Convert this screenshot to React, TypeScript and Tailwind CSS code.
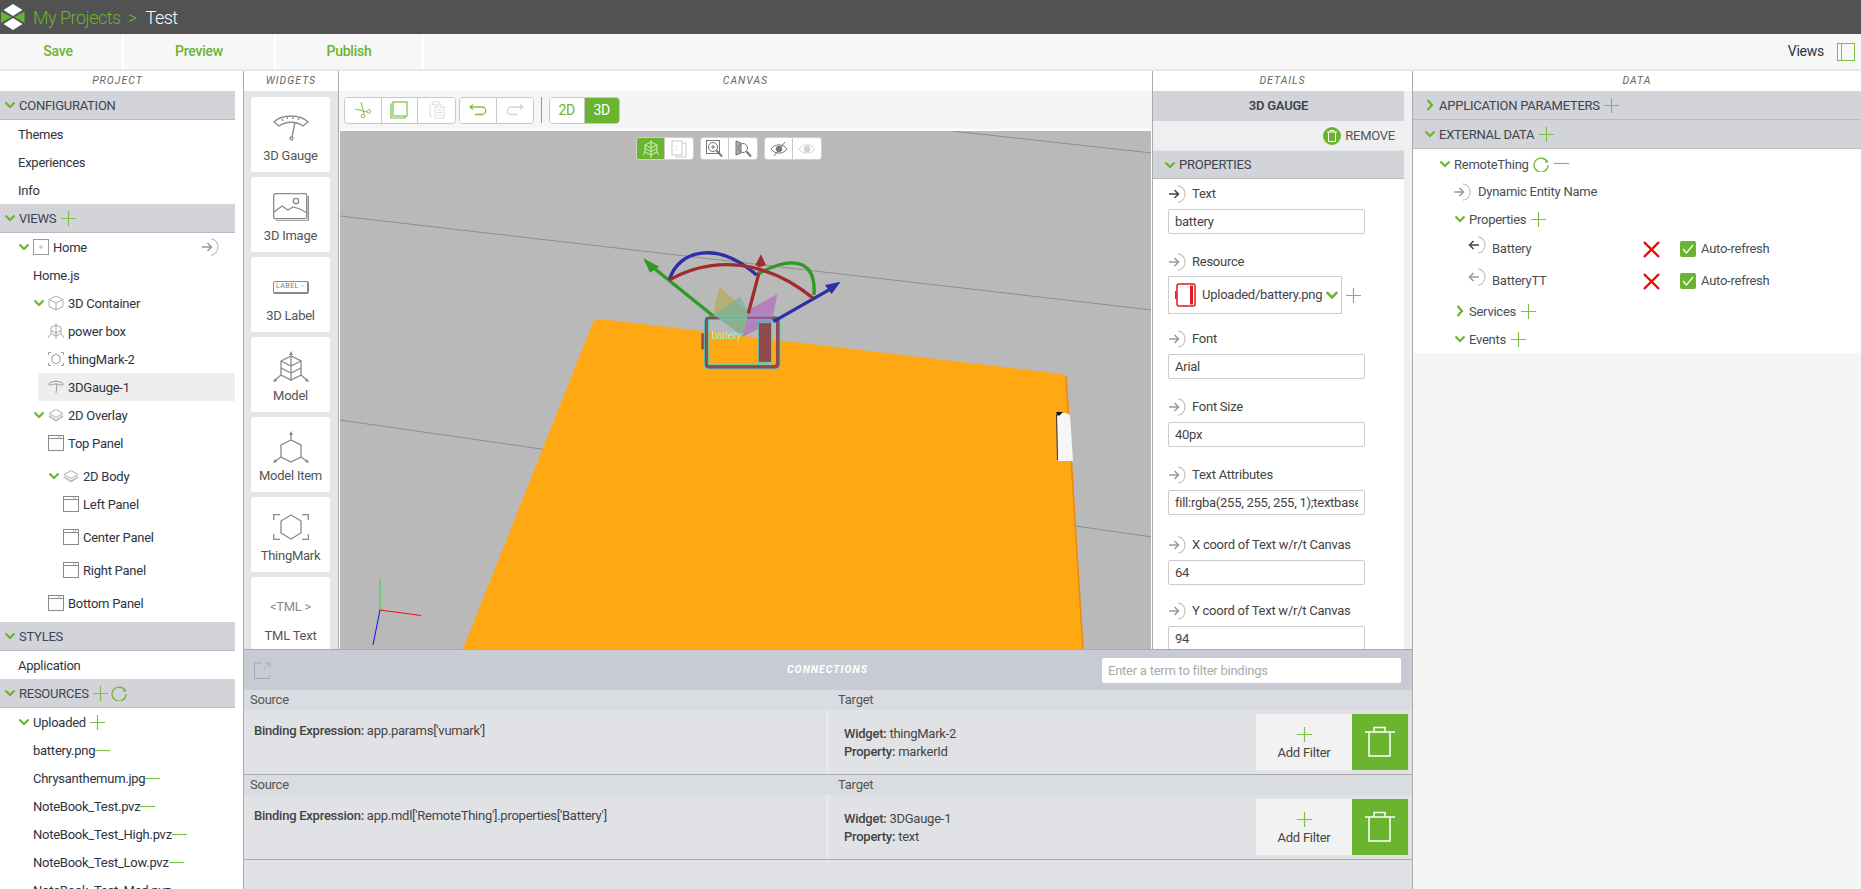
import type { ReactNode } from 'react';

const GREEN = '#6ab42f';

function Chevron({ open = true, className = '', size = 12 }: { open?: boolean; className?: string; size?: number }) {
  return (
    <svg width={size} height={size} viewBox="0 0 12 12" className={`shrink-0 ${className}`} fill="none" stroke={GREEN} strokeWidth="2.2">
      {open ? <path d="M1.5 3.5 6 8l4.5-4.5" /> : <path d="M3.5 1 8 6l-4.5 5" />}
    </svg>
  );
}

function Plus({ size = 15 }: { size?: number }) {
  return (
    <svg width={size} height={size} viewBox="0 0 15 15" className="shrink-0" stroke="#7cc04a" strokeWidth="1.2">
      <path d="M7.5 0v15M0 7.5h15" />
    </svg>
  );
}

function Minus() {
  return (
    <svg width="15" height="15" viewBox="0 0 15 15" className="shrink-0" stroke="#7cc04a" strokeWidth="1.2">
      <path d="M0 7.5h15" />
    </svg>
  );
}

function Refresh() {
  return (
    <svg width="16" height="16" viewBox="0 0 16 16" className="shrink-0" fill="none" stroke="#6ab42f" strokeWidth="1.2">
      <path d="M14 5.5A7 7 0 1 0 15 9" />
      <path d="M11.5 6.5h4l-1.6-3z" fill="#6ab42f" stroke="none" />
    </svg>
  );
}

function BindArrow({ dark = false, left = false }: { dark?: boolean; left?: boolean }) {
  const c = dark ? '#444' : '#999';
  return (
    <svg width="19" height="18" viewBox="0 0 19 18" className="shrink-0" fill="none">
      <path d={left ? 'M11 9H1.5M5.5 5 1.5 9l4 4' : 'M1 9h9.5M6.5 5l4 4-4 4'} stroke={c} strokeWidth="1.5" />
      <path d="M10 .8C14 1 17 4.5 17 9s-3 8-7 8.2" stroke="#c4c4c4" strokeWidth="1.2" />
    </svg>
  );
}

function PanelIcon() {
  return (
    <svg width="16" height="16" viewBox="0 0 16 16" className="shrink-0" fill="none" stroke="#8a8a8a">
      <rect x=".5" y=".5" width="15" height="15" />
      <path d="M1 3.5h14" />
      <path d="M10 2h4" strokeDasharray="1 1" />
    </svg>
  );
}

function LayerIcon() {
  return (
    <svg width="16" height="14" viewBox="0 0 16 14" className="shrink-0" fill="none" stroke="#aaa">
      <path d="M8 1.5 15 5.5 8 9.5 1 5.5z" />
      <path d="M1 8l7 4.5L15 8" strokeWidth="1.6" stroke="#bbb" />
    </svg>
  );
}

function CubeIcon() {
  return (
    <svg width="16" height="16" viewBox="0 0 16 16" className="shrink-0" fill="none" stroke="#aaa">
      <path d="M8 1 15 4.5v7L8 15 1 11.5v-7zM1 4.5 8 8l7-3.500M8 8v7" />
    </svg>
  );
}

function ModelTreeIcon() {
  return (
    <svg width="16" height="16" viewBox="0 0 16 16" className="shrink-0" fill="none" stroke="#aaa">
      <path d="M8 0v16M3 4.500 8 2l5 2.500v6L8 13l-5-2.500zM3 7.500 8 10l5-2.500M0 15l3-4.500M16 15l-3-4.500" />
    </svg>
  );
}

function MarkTreeIcon() {
  return (
    <svg width="16" height="14" viewBox="0 0 16 14" className="shrink-0" fill="none" stroke="#999">
      <path d="M.5 3V.5H3M13 .5h2.500V3M.5 11v2.500H3M13 13.500h2.500V11" />
      <path d="M8 2l4 2.500v5L8 12 4 9.500v-5z" />
    </svg>
  );
}

function GaugeTreeIcon() {
  return (
    <svg width="16" height="14" viewBox="0 0 16 14" className="shrink-0" fill="none" stroke="#999">
      <path d="M.5 4C4 .5 12 .5 15.500 4L14 5.500C11 3.500 5 3.500 2 5.500z" />
      <path d="M9 4 8 13" />
    </svg>
  );
}

function HomeIcon() {
  return (
    <svg width="16" height="16" viewBox="0 0 16 16" className="shrink-0" fill="none" stroke="#999">
      <rect x=".5" y=".5" width="15" height="15" />
      <path d="M8 6v4M6 8h4" stroke="#bbb" />
    </svg>
  );
}

function TreeRow({
  pad,
  label,
  chevron,
  closed,
  icon,
  trailing,
  selected,
  className = 'h-[28px]',
}: {
  pad: string;
  label: string;
  chevron?: boolean;
  closed?: boolean;
  icon?: ReactNode;
  trailing?: ReactNode;
  selected?: boolean;
  className?: string;
}) {
  return (
    <div className={`flex items-center whitespace-nowrap ${pad} ${selected ? 'relative' : ''} ${className}`}>
      {selected && <div className="absolute top-0 right-0 bottom-0 left-[38px] bg-[#eeeeee]" />}
      {chevron && <Chevron open={!closed} className="relative mr-[3px]" />}
      {icon && <span className="relative mr-[4px] flex w-[16px] justify-center">{icon}</span>}
      <span className="relative top-px">{label}</span>
      {trailing}
    </div>
  );
}

function SectionHead({
  title,
  open = true,
  trailing,
  pad = 'pl-[4px]',
}: {
  title: string;
  open?: boolean;
  trailing?: ReactNode;
  pad?: string;
}) {
  return (
    <div className={`flex h-[29px] items-center border-b border-[#b9bbc0] bg-[#d2d4d9] whitespace-nowrap text-[#40444c] ${pad}`}>
      <Chevron open={open} className="mr-[3px]" />
      <span className="relative top-px">{title}</span>
      {trailing}
    </div>
  );
}

function ColumnTitle({ children }: { children: ReactNode }) {
  return <div className="flex h-[20px] shrink-0 items-center justify-center bg-white text-[10.5px] tracking-[1px] text-[#666] italic">{children}</div>;
}

function ProjectColumn() {
  return (
    <div className="h-full w-[243px] shrink-0 overflow-hidden bg-white pr-[8px] text-[#2e3440]">
      <ColumnTitle>PROJECT</ColumnTitle>
      <SectionHead title="CONFIGURATION" />
      <TreeRow pad="pl-[18px]" label="Themes" />
      <TreeRow pad="pl-[18px]" label="Experiences" />
      <TreeRow pad="pl-[18px]" label="Info" />
      <SectionHead title="VIEWS" trailing={<span className="ml-[5px]"><Plus /></span>} />
      <div className="relative">
        <TreeRow pad="pl-[18px]" chevron icon={<HomeIcon />} label="Home" />
        <span className="absolute top-[5px] left-[201px]"><BindArrow /></span>
      </div>
      <TreeRow pad="pl-[33px]" label="Home.js" />
      <TreeRow pad="pl-[33px]" chevron icon={<CubeIcon />} label="3D Container" />
      <TreeRow pad="pl-[48px]" icon={<ModelTreeIcon />} label="power box" />
      <TreeRow pad="pl-[48px]" icon={<MarkTreeIcon />} label="thingMark-2" />
      <TreeRow pad="pl-[48px]" icon={<GaugeTreeIcon />} label="3DGauge-1" selected />
      <TreeRow pad="pl-[33px]" chevron icon={<LayerIcon />} label="2D Overlay" />
      <TreeRow pad="pl-[48px]" icon={<PanelIcon />} label="Top Panel" className="mb-[5px] h-[28px]" />
      <TreeRow pad="pl-[48px]" chevron icon={<LayerIcon />} label="2D Body" />
      <TreeRow pad="pl-[63px]" icon={<PanelIcon />} label="Left Panel" className="mb-[5px] h-[28px]" />
      <TreeRow pad="pl-[63px]" icon={<PanelIcon />} label="Center Panel" className="mb-[5px] h-[28px]" />
      <TreeRow pad="pl-[63px]" icon={<PanelIcon />} label="Right Panel" className="mb-[5px] h-[28px]" />
      <TreeRow pad="pl-[48px]" icon={<PanelIcon />} label="Bottom Panel" className="mb-[5px] h-[28px]" />
      <SectionHead title="STYLES" />
      <TreeRow pad="pl-[18px]" label="Application" />
      <SectionHead
        title="RESOURCES"
        trailing={
          <span className="ml-[4px] flex items-center gap-[3px]">
            <Plus />
            <Refresh />
          </span>
        }
      />
      <TreeRow pad="pl-[18px]" chevron label="Uploaded" trailing={<span className="ml-[4px]"><Plus /></span>} />
      {['battery.png', 'Chrysanthemum.jpg', 'NoteBook_Test.pvz', 'NoteBook_Test_High.pvz', 'NoteBook_Test_Low.pvz', 'NoteBook_Test_Med.pvz'].map((name) => (
        <TreeRow key={name} pad="pl-[33px]" label={name} trailing={<Minus />} />
      ))}
    </div>
  );
}

function WidgetGlyph({ kind }: { kind: string }) {
  const line = { fill: 'none', stroke: '#8a8a8a', strokeWidth: 1.3 };
  if (kind === 'gauge') {
    return (
      <svg width="36" height="28" viewBox="0 0 36 28" {...line}>
        <path d="M1 9C9 1 27 1 35 9l-5 4C23 8 13 8 6 13z" />
        <path d="M9 6l1 2M14 4l.5 2M20 3.500V6M26 5l-1 2M22 9l-3 15" />
        <circle cx="18.500" cy="25.500" r="1.500" />
      </svg>
    );
  }
  if (kind === 'image') {
    return (
      <svg width="36" height="28" viewBox="0 0 36 28" {...line}>
        <rect x=".7" y=".7" width="33" height="25" rx="1.500" />
        <path d="M35.300 3v23.500a1.500 1.500 0 0 1-1.500 1.500H3" />
        <path d="M1 19l8-6 6 4 5-3 7 2 7 4" />
        <circle cx="23" cy="8" r="2.700" />
      </svg>
    );
  }
  if (kind === 'label') {
    return (
      <div className="flex h-[28px] items-center">
        <div className="flex h-[13px] w-[36px] items-center justify-center rounded-[2px] border border-r-2 border-b-2 border-[#8a8a8a] text-[7px] leading-none tracking-[0.5px] text-[#777]">LABEL ◦</div>
      </div>
    );
  }
  if (kind === 'model') {
    return (
      <svg width="36" height="32" viewBox="0 0 36 32" {...line}>
        <path d="M18 2v28M8 10l10-5 10 5v14l-10 5-10-5zM8 17l10 5 10-5M8 10l10 5 10-5M8 24 1 30M28 24l7 6" />
        <path d="M18 0l-2 4h4zM0 31l4-1-2-3zM36 31l-4-1 2-3z" fill="#8a8a8a" stroke="none" />
      </svg>
    );
  }
  if (kind === 'item') {
    return (
      <svg width="36" height="32" viewBox="0 0 36 32" {...line}>
        <path d="M18 2v8M8 14l10-5 10 5v12l-10 5-10-5zM8 26l-7 5M28 26l7 5" />
        <path d="M18 0l-2 4h4zM0 32l4-1-2-3zM36 32l-4-1 2-3z" fill="#8a8a8a" stroke="none" />
      </svg>
    );
  }
  if (kind === 'mark') {
    return (
      <svg width="36" height="26" viewBox="0 0 36 26" {...line}>
        <path d="M7 .7H.7V6M29 .7h6.300V6M.7 20v5.300H7M29 25.300h6.300V20" />
        <path d="M18 1l10 6v12l-10 6-10-6V7z" />
      </svg>
    );
  }
  return <div className="flex h-[28px] items-center gap-[1px] text-[13px] text-[#8a8a8a]">&lt;TML &gt;</div>;
}

const widgets = [
  { kind: 'gauge', label: '3D Gauge' },
  { kind: 'image', label: '3D Image' },
  { kind: 'label', label: '3D Label' },
  { kind: 'model', label: 'Model' },
  { kind: 'item', label: 'Model Item' },
  { kind: 'mark', label: 'ThingMark' },
  { kind: 'tml', label: 'TML Text' },
];

function WidgetsColumn() {
  return (
    <div className="flex h-full w-[96px] shrink-0 flex-col overflow-hidden border-r border-l border-[#aaaaaa]">
      <ColumnTitle>WIDGETS</ColumnTitle>
      <div className="flex flex-1 flex-col gap-[5px] overflow-hidden bg-[#e5e5e5] px-[7px] pt-[6px]">
        {widgets.map((w) => (
          <div key={w.label} className="flex h-[75px] w-[79px] shrink-0 flex-col items-center rounded-[3px] bg-white pt-[14px] text-[#555]">
            <div className="flex h-[32px] items-center justify-center"><WidgetGlyph kind={w.kind} /></div>
            <div className="mt-[3px] leading-[20px] whitespace-nowrap">{w.label}</div>
          </div>
        ))}
      </div>
    </div>
  );
}

function ToolButton({ children, last, active }: { children: ReactNode; last?: boolean; active?: boolean }) {
  return (
    <div className={`flex h-full items-center justify-center ${active ? 'bg-[#6ab42f] text-white' : 'bg-white'} ${last ? '' : 'border-r border-[#c8c8c8]'}`}>
      {children}
    </div>
  );
}

function CanvasToolbar() {
  return (
    <div className="flex h-[38px] shrink-0 items-center bg-[#f5f5f5] pl-[5px]">
      <div className="grid h-[27px] w-[112px] grid-cols-3 overflow-hidden rounded-[4px] border border-[#c8c8c8]">
        <ToolButton>
          <svg width="18" height="18" viewBox="0 0 18 18" fill="none" stroke="#7cc04a">
            <path d="M7 1l3 11M1 8l12 3M10 12v1" />
            <circle cx="9" cy="15" r="1.800" />
            <circle cx="15" cy="10.500" r="1.800" />
          </svg>
        </ToolButton>
        <ToolButton>
          <svg width="18" height="18" viewBox="0 0 18 18" fill="none" stroke="#7cc04a" strokeWidth="1.200">
            <rect x="3" y="1" width="14" height="14" />
            <path d="M3 3H1v14h14v-2" />
          </svg>
        </ToolButton>
        <ToolButton last>
          <svg width="16" height="18" viewBox="0 0 16 18" fill="none" stroke="#dcdcdc">
            <path d="M3 15H1V3h3M10 3h2v3" />
            <rect x="4" y="1" width="6" height="3" />
            <rect x="6" y="6" width="9" height="11" />
            <path d="M8 9h5M8 11.500h5M8 14h5" />
          </svg>
        </ToolButton>
      </div>
      <div className="ml-[3px] grid h-[27px] w-[75px] grid-cols-2 overflow-hidden rounded-[4px] border border-[#c8c8c8]">
        <ToolButton>
          <svg width="18" height="12" viewBox="0 0 18 12" fill="none" stroke="#7cc04a" strokeWidth="1.300">
            <path d="M1 3h12a3.500 3.500 0 0 1 0 7.500H6M4 .5 1 3l3 2.500" />
          </svg>
        </ToolButton>
        <ToolButton last>
          <svg width="18" height="12" viewBox="0 0 18 12" fill="none" stroke="#d4d4d4" strokeWidth="1.300">
            <path d="M17 3H5a3.500 3.500 0 0 0 0 7.500h7M14 .5 17 3l-3 2.500" />
          </svg>
        </ToolButton>
      </div>
      <div className="mx-[7px] h-[26px] w-px bg-[#999]" />
      <div className="grid h-[27px] w-[71px] grid-cols-2 overflow-hidden rounded-[4px] border border-[#c8c8c8] text-[14px]">
        <ToolButton><span className="text-[#6ab42f]">2D</span></ToolButton>
        <ToolButton last active>3D</ToolButton>
      </div>
    </div>
  );
}

function FloatTools() {
  return (
    <div className="absolute top-[6px] left-[296px] flex h-[23px] gap-[6px]">
      <div className="grid w-[58px] grid-cols-2 overflow-hidden rounded-[3px] border border-[#d0d0d0]">
        <ToolButton active>
          <svg width="16" height="18" viewBox="0 0 16 18" fill="none" stroke="#d7eec4">
            <path d="M8 0v18M2 5l6-3 6 3v7l-6 3-6-3zM2 8.500l6 3 6-3M2 5l6 3 6-3M0 15l2-3M16 15l-2-3" />
          </svg>
        </ToolButton>
        <ToolButton last>
          <svg width="16" height="18" viewBox="0 0 16 18" fill="none" stroke="#c9c9c9">
            <rect x="1" y="1" width="10" height="14" />
            <path d="M11 3h4v14H5v-2M5 6v1M5 9v1" />
          </svg>
        </ToolButton>
      </div>
      <div className="grid w-[58px] grid-cols-2 overflow-hidden rounded-[3px] border border-[#d0d0d0]">
        <ToolButton>
          <svg width="17" height="18" viewBox="0 0 17 18" fill="none" stroke="#777">
            <rect x=".5" y=".5" width="13" height="13" />
            <circle cx="7" cy="7" r="4.500" />
            <path d="M7 5v4M5 7h4" />
            <path d="M10.500 10.500 16 16.500" strokeWidth="2" />
          </svg>
        </ToolButton>
        <ToolButton last>
          <svg width="17" height="18" viewBox="0 0 17 18" fill="none" stroke="#777">
            <path d="M1 1v14l5-2V3z" fill="#aaa" />
            <circle cx="8" cy="8" r="4.500" />
            <path d="M11.500 11.500 16 16.500" strokeWidth="2" />
          </svg>
        </ToolButton>
      </div>
      <div className="grid w-[58px] grid-cols-2 overflow-hidden rounded-[3px] border border-[#d0d0d0]">
        <ToolButton>
          <svg width="18" height="16" viewBox="0 0 18 16" fill="none" stroke="#777">
            <path d="M1 8c4-5.500 12-5.500 16 0-4 5.500-12 5.500-16 0z" />
            <circle cx="9" cy="8" r="2.800" fill="#777" />
            <path d="M15 1 4 15" />
          </svg>
        </ToolButton>
        <ToolButton last>
          <svg width="18" height="14" viewBox="0 0 18 14" fill="none" stroke="#d0d0d0">
            <path d="M1 7c4-5.500 12-5.500 16 0-4 5.500-12 5.500-16 0z" />
            <circle cx="9" cy="7" r="2.800" fill="#d0d0d0" />
          </svg>
        </ToolButton>
      </div>
    </div>
  );
}

function Scene() {
  return (
    <svg viewBox="340 131 811 518" className="absolute inset-0 h-full w-full">
      <rect x="340" y="131" width="811" height="518" fill="#b9b9b9" />
      <g stroke="#8e8e8e" strokeWidth="1">
        <path d="M952 131 1152 153" />
        <path d="M340 216 1152 310" />
        <path d="M340 420 1152 537" />
      </g>
      <path d="M600 319Q594 318 592 325L463 649H1083L1067 380L1062 374z" fill="#ffa814" />
      <path d="M1066 376 1083 649" stroke="#e88a10" strokeWidth="1.500" fill="none" />
      <path d="M1057 413h9l4 2 3 46h-15z" fill="#f6f6f6" />
      <path d="M1056 412h7l-3 3-2 1z" fill="#111" />
      <path d="M1056.500 414 1057.500 460" stroke="#333" fill="none" />
      <g transform="translate(600 230) scale(0.3333)">
        <path d="M319 276q0-12 12-12h191q12 0 12 12v123q0 12-12 12H331q-12 0-12-12z" fill="none" stroke="#8f4a4e" strokeWidth="12" />
        <path d="M304 310h9v48h-9z" fill="#8f4a4e" />
        <path d="M358 170 340 250 430 320 445 245z" fill="#b5ad6e" opacity=".9" />
        <path d="M420 200 340 255 430 320 445 240z" fill="#6ab0a0" opacity=".55" />
        <path d="M532 192 445 240 430 320 515 275z" fill="#b05cc0" opacity=".6" />
        <path d="M475 278h40v119h-40z" fill="#8f4a4e" />
        <path d="M313 270q0-12 12-12h203q12 0 12 12v135q0 12-12 12H325q-12 0-12-12z" fill="none" stroke="#3ddbd0" strokeWidth="2.500" />
        <path d="M325 269h190v135H325zM475 278h40v119h-40z" fill="none" stroke="#3ddbd0" strokeWidth="2.500" />
        <path d="M340 258 150 105" stroke="#2f9a24" strokeWidth="10" fill="none" />
        <path d="M130 85 178 110 150 128z" fill="#2f9a24" />
        <path d="M520 275 695 175" stroke="#2c2fa8" strokeWidth="10" fill="none" />
        <path d="M722 155 695 192 675 165z" fill="#2c2fa8" />
        <path d="M445 250 478 125" stroke="#a02c2c" strokeWidth="10" fill="none" />
        <path d="M483 73 498 105 478 112 466 105z" fill="#a02c2c" />
        <path d="M208 150C235 60 350 30 470 135" stroke="#2c2fa8" strokeWidth="10" fill="none" />
        <path d="M478 130C560 85 650 75 642 195" stroke="#2f9a24" strokeWidth="10" fill="none" />
        <path d="M208 150C340 75 500 90 640 205" stroke="#a02c2c" strokeWidth="10" fill="none" />
        <text x="335" y="327" fontSize="30" fill="#7ff5f0" fontFamily="Liberation Sans, sans-serif">battery</text>
      </g>
      <path d="M380 610V579" stroke="#22e022" fill="none" />
      <path d="M380 610 421 615.500" stroke="#ee1111" fill="none" />
      <path d="M380 610 373 645" stroke="#1111ee" fill="none" />
    </svg>
  );
}

function CanvasColumn() {
  return (
    <div className="flex h-full min-w-0 flex-1 flex-col overflow-hidden">
      <ColumnTitle>CANVAS</ColumnTitle>
      <CanvasToolbar />
      <div className="relative mt-[2px] ml-px flex-1 border-r border-white">
        <Scene />
        <FloatTools />
      </div>
    </div>
  );
}

function Field({ label, value, dark, className = 'mb-[18px]' }: { label: string; value: string; dark?: boolean; className?: string }) {
  return (
    <div className={className}>
      <div className="flex h-[20px] items-center gap-[5px]">
        <BindArrow dark={dark} />
        <span className="whitespace-nowrap">{label}</span>
      </div>
      <input
        readOnly
        value={value}
        className="mt-[5px] h-[25px] w-[197px] rounded-[2px] border border-[#cccccc] bg-white px-[6px] text-[#444] outline-none"
      />
    </div>
  );
}

function DetailsColumn() {
  return (
    <div className="flex h-full w-[261px] shrink-0 flex-col overflow-hidden border-r border-l border-[#aaaaaa] bg-[#f0f0f0]">
      <ColumnTitle>DETAILS</ColumnTitle>
      <div className="w-[251px] flex-1 bg-white text-[#444]">
        <div className="flex h-[30px] items-center justify-center bg-[#d2d4d9] font-semibold text-[#40444c]">3D GAUGE</div>
        <div className="flex h-[29px] items-center justify-end gap-[4px] bg-[#efefef] pr-[9px] text-[#555]">
          <span className="flex h-[18px] w-[18px] items-center justify-center rounded-full bg-[#6ab42f]">
            <svg width="10" height="12" viewBox="0 0 10 12" fill="none" stroke="white">
              <path d="M0 2h10M3 2V.5h4V2M1.500 2v9.500h7V2" />
            </svg>
          </span>
          <span>REMOVE</span>
        </div>
        <div className="flex h-[29px] items-center border-y border-[#e4e4e4] border-b-[#b9bbc0] bg-[#d2d4d9] pl-[11px] text-[#40444c]">
          <Chevron className="mr-[3px]" />
          PROPERTIES
        </div>
        <div className="pt-[5px] pl-[15px]">
          <Field label="Text" value="battery" dark />
          <div className="mb-[15px]">
            <div className="flex h-[20px] items-center gap-[5px]">
              <BindArrow />
              <span>Resource</span>
            </div>
            <div className="mt-[4px] flex items-center">
              <div className="flex h-[38px] w-[174px] items-center border border-[#cccccc] pl-[6px]">
                <svg width="22" height="24" viewBox="0 0 22 24" className="mr-[5px] shrink-0" fill="none" stroke="#dd1c1c" strokeWidth="1.500">
                  <rect x="2" y="1" width="18" height="22" rx="2" />
                  <path d="M16.500 2.500v19" strokeWidth="3" />
                  <path d="M.8 8v8" />
                </svg>
                <span className="whitespace-nowrap">Uploaded/battery.png</span>
                <Chevron size={14} className="ml-[3px]" />
              </div>
              <span className="ml-[4px]"><Plus /></span>
            </div>
          </div>
          <Field label="Font" value="Arial" />
          <Field label="Font Size" value="40px" />
          <Field label="Text Attributes" value="fill:rgba(255, 255, 255, 1);textbaseline:middle;textalign:center" className="mb-[20px]" />
          <Field label="X coord of Text w/r/t Canvas" value="64" className="mb-[16px]" />
          <Field label="Y coord of Text w/r/t Canvas" value="94" />
        </div>
      </div>
    </div>
  );
}

function Binding({ expression, widget, property }: { expression: string; widget: string; property: string }) {
  return (
    <div className="border-b border-[#aaaaaa]">
      <div className="flex h-[20px] items-center bg-[#d9dce0] text-[#555]">
        <div className="w-[584px] pl-[6px]">Source</div>
        <div className="pl-[10px]">Target</div>
      </div>
      <div className="flex h-[64px] bg-[#e1e2e5] text-[#444]">
        <div className="w-[584px] border-r border-[#f0f0f0] pt-[11px] pl-[10px]">
          <span className="font-medium">Binding Expression:</span> {expression}
        </div>
        <div className="flex flex-1 items-start pt-[15px] pl-[16px] leading-[18px]">
          <div>
            <div><span className="font-medium">Widget:</span> {widget}</div>
            <div><span className="font-medium">Property:</span> {property}</div>
          </div>
        </div>
        <div className="flex pt-[4px] pr-[4px]">
          <div className="flex h-[56px] w-[96px] flex-col items-center bg-[#f2f2f2] pt-[13px] text-[#444]">
            <Plus />
            <span className="mt-[1px]">Add Filter</span>
          </div>
          <div className="flex h-[56px] w-[56px] items-center justify-center bg-[#6ab42f]">
            <svg width="30" height="32" viewBox="0 0 30 32" fill="none" stroke="white" strokeWidth="1.500">
              <path d="M0 6h30M9 6V1.500h11V6M4 6v24h21V6" />
            </svg>
          </div>
        </div>
      </div>
    </div>
  );
}

function ConnectionsPanel() {
  return (
    <div className="h-[240px] shrink-0 border-t border-r border-l border-[#aaaaaa] bg-[#e1e2e5]">
      <div className="grid h-[40px] grid-cols-3 items-center bg-[#c8cbd3] pr-[11px] pl-[10px]">
        <svg width="17" height="17" viewBox="0 0 17 17" fill="none" stroke="#a6a9b0">
          <path d="M8 1H.5v15.500H16V13M10 7l6-6M11 1h5v5" />
        </svg>
        <span className="text-center text-[10.5px] font-bold tracking-[1px] text-white italic">CONNECTIONS</span>
        <input
          readOnly
          placeholder="Enter a term to filter bindings"
          className="ml-auto h-[25px] w-[299px] rounded-[2px] bg-white px-[6px] outline-none placeholder:text-[#aaaaaa]"
        />
      </div>
      <Binding expression="app.params['vumark']" widget="thingMark-2" property="markerId" />
      <Binding expression="app.mdl['RemoteThing'].properties['Battery']" widget="3DGauge-1" property="text" />
    </div>
  );
}

function Check() {
  return (
    <span className="flex h-[16px] w-[16px] shrink-0 items-center justify-center rounded-[2px] bg-[#6ab42f]">
      <svg width="12" height="10" viewBox="0 0 12 10" fill="none" stroke="white" strokeWidth="1.200">
        <path d="M1 5l3.500 4L11 1" />
      </svg>
    </span>
  );
}

function RedX() {
  return (
    <svg width="17" height="17" viewBox="0 0 17 17" className="shrink-0" stroke="#ff0000" strokeWidth="2.400">
      <path d="M1 1l15 15M16 1 1 16" />
    </svg>
  );
}

function DataProperty({ name, dark }: { name: string; dark?: boolean }) {
  return (
    <div className="flex h-[32px] items-center pl-[55px]">
      <span className="-mt-[8px]"><BindArrow dark={dark} left /></span>
      <span className="ml-[5px] w-[151px]">{name}</span>
      <RedX />
      <span className="ml-[20px]"><Check /></span>
      <span className="ml-[5px]">Auto-refresh</span>
    </div>
  );
}

function DataColumn() {
  return (
    <div className="h-full flex-1 overflow-hidden bg-[#f5f5f5] text-[#4a4e55]">
      <ColumnTitle>DATA</ColumnTitle>
      <div className="h-[262px] bg-white">
        <SectionHead title="APPLICATION PARAMETERS" open={false} pad="pl-[11px]" trailing={<span className="ml-[4px]"><Plus /></span>} />
        <SectionHead title="EXTERNAL DATA" pad="pl-[11px]" trailing={<span className="ml-[5px]"><Plus /></span>} />
        <TreeRow
          pad="pl-[26px]"
          chevron
          label="RemoteThing"
          className="h-[29px]"
          trailing={
            <span className="ml-[4px] flex items-center gap-[5px]">
              <Refresh />
              <Minus />
            </span>
          }
        />
        <div className="flex h-[27px] items-center gap-[6px] pl-[40px]">
          <BindArrow />
          Dynamic Entity Name
        </div>
        <TreeRow pad="pl-[41px]" chevron label="Properties" trailing={<span className="ml-[5px]"><Plus /></span>} />
        <DataProperty name="Battery" dark />
        <DataProperty name="BatteryTT" />
        <TreeRow pad="pl-[41px]" chevron closed label="Services" trailing={<span className="ml-[5px]"><Plus /></span>} />
        <TreeRow pad="pl-[41px]" chevron label="Events" trailing={<span className="ml-[5px]"><Plus /></span>} />
      </div>
    </div>
  );
}

export default function App() {
  return (
    <div className="flex h-[889px] w-[1861px] flex-col overflow-hidden bg-white font-['Roboto','Open_Sans',sans-serif] text-[13px] tracking-[-0.25px]">
      <div className="flex h-[34px] shrink-0 items-center bg-[#525252] text-[18px] font-light tracking-[-0.5px]">
        <svg width="24" height="28" viewBox="0 0 24 28" className="mr-[8px] ml-px">
          <path d="M12 1 21.500 7 12 13 2.500 7zM12 15 21.500 21 12 27 2.500 21z" fill="white" />
          <path d="M0 8.500 10.500 14 0 20zM23.500 8.500 13.500 14 23.500 20z" fill="#6ab42f" />
        </svg>
        <span className="text-[#6ab42f]">My Projects</span>
        <span className="ml-[7px] text-[#6ab42f]">&gt;</span>
        <span className="ml-[9px] text-white">Test</span>
      </div>
      <div className="flex h-[37px] shrink-0 items-center border-b-2 border-[#e8e8e8] bg-[#f7f7f7] text-[14px] font-medium text-[#6ab42f]">
        <div className="flex h-full w-[124px] items-center justify-center border-r-2 border-white pr-[6px]">Save</div>
        <div className="flex h-full w-[152px] items-center justify-center border-r-2 border-white">Preview</div>
        <div className="flex h-full w-[148px] items-center justify-center border-r-2 border-white">Publish</div>
        <div className="ml-auto flex items-center font-normal text-[#2e3440]">
          <span>Views</span>
          <svg width="18" height="18" viewBox="0 0 18 18" className="mr-[6px] ml-[13px]" fill="none" stroke="#7cc04a">
            <rect x=".5" y=".5" width="17" height="17" />
            <path d="M4.500 1v16M2.500 3.500h0M2.500 6h0" />
          </svg>
        </div>
      </div>
      <div className="flex min-h-0 flex-1">
        <ProjectColumn />
        <div className="flex w-[1170px] shrink-0 flex-col">
          <div className="flex min-h-0 flex-1">
            <WidgetsColumn />
            <CanvasColumn />
            <DetailsColumn />
          </div>
          <ConnectionsPanel />
        </div>
        <DataColumn />
      </div>
    </div>
  );
}
